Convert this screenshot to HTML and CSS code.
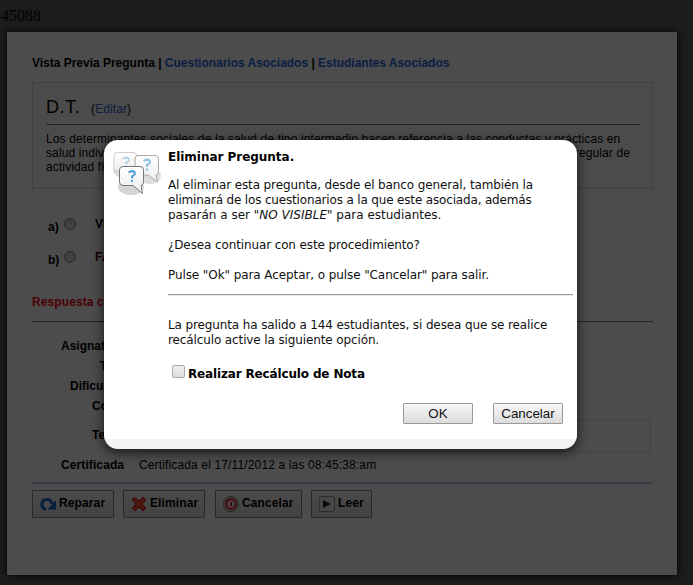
FILE: index.html
```html
<!DOCTYPE html>
<html lang="es">
<head>
<meta charset="utf-8">
<title>Vista Previa Pregunta</title>
<link rel="stylesheet" href="styles.css">
</head>
<body>
<div class="counter">45088</div>
<main class="page">
  <nav class="tabs">Vista Previa Pregunta | <a>Cuestionarios Asociados</a> | <a>Estudiantes Asociados</a></nav>
  <section class="question">
    <h1>D.T. <span class="edit">(<a>Editar</a>)</span></h1>
    <p><span>Los determinantes sociales de la salud de tipo intermedio hacen referencia a las conductas y prácticas en</span><br>
    <span class="q2"><span>salud individuales</span><span>regular de</span></span>
    actividad física.</p>
  </section>
  <div class="option"><b>a)</b><i class="radio"></i><span>VERDADERO</span></div>
  <div class="option"><b>b)</b><i class="radio"></i><span class="false">FALSO</span></div>
  <div class="answer">Respuesta correcta</div>
  <div class="rule"></div>
  <div class="details">
    <span class="l1">Asignatura</span><span class="l2">Tipo</span><span class="l3">Dificultad</span><span class="l4">Corte</span>
    <div class="topic"><span>Tema</span><div class="field"></div></div>
    <div class="cert"><b>Certificada</b><span>Certificada el 17/11/2012 a las 08:45:38:am</span></div>
  </div>
  <div class="blue-rule"></div>
  <div class="actions">
    <button class="w1"><svg width="18" height="18" viewBox="0 0 18 18"><path d="M7 14.500C1.500 12.500 1.500 5 7.500 4.500C11 4.300 12.500 6.500 13 9" fill="none" stroke="#1f68d0" stroke-width="3.200"/><path d="M17 5V14.500H8.500Z" fill="#1f68d0"/></svg><span>Reparar</span></button>
    <button class="w2"><svg width="18" height="18" viewBox="0 0 18 18"><path d="M4.500 2.500L9 6L13 2L16 5L12 9L16 13L13 16L9 12L5 16L2 13L6 9L2 5Z" fill="#ff4a30" stroke="#d01a12" stroke-linejoin="round"/></svg><span>Eliminar</span></button>
    <button class="w3"><svg width="18" height="18" viewBox="0 0 18 18"><circle cx="9" cy="9" r="7.500" fill="#ddd" stroke="#777"/><circle cx="9" cy="9" r="4.800" fill="#f4e8e8" stroke="#e3222d" stroke-width="2.200"/><path d="M9 7.200V10.800" stroke="#d61d28" stroke-width="2"/></svg><span>Cancelar</span></button>
    <button class="w4"><svg width="18" height="18" viewBox="0 0 18 18"><rect x="1.500" y="1.500" width="15" height="15" rx="1" fill="#efefef" stroke="#999"/><path d="M5 5L13 9L5 13Z" fill="#222"/></svg><span>Leer</span></button>
  </div>
</main>
<div class="overlay"></div>
<div class="dialog" role="dialog">
  <svg class="bubbles" width="50" height="50" viewBox="0 0 50 50">
    <defs><linearGradient id="bg" x2="0" y2="1"><stop stop-color="#fff"/><stop offset="1" stop-color="#eee"/></linearGradient></defs>
    <g fill="#ddd"><ellipse cx="11" cy="19" rx="11" ry="8"/><ellipse cx="37" cy="25" rx="11" ry="8"/></g>
    <path d="M4.500 1.500H20Q24 1.500 24 5V17Q24 20 21 20H4Q1 20 1 17V4.500Q1 1.500 4.500 1.500Z" fill="url(#bg)" stroke="#ccc"/>
    <path d="M9.500 8Q13 5.500 15.500 7.500Q17 10 13 12V13M13 14.500V16" class="mark faint"/>
    <path d="M25 4.500H42Q45.500 4.500 45.500 8V20Q45.500 23.500 43 24L44.500 31L35 24H25Q22 23 22 20V8Q22 4.500 25 4.500Z" fill="url(#bg)" stroke="#aaa"/>
    <path d="M30.500 10Q34 7.500 36.500 9.500Q38 12 34 14V16M34 17.500V19.500" class="mark mid"/>
    <ellipse cx="18" cy="36" rx="13" ry="8" fill="#d5d5d5"/>
    <path d="M10 15.500H27Q30.500 15.500 30.500 19V31Q30.500 34 28 34.500L29.500 42.500L20 34.500H10Q6.500 34 6.500 31V19Q6.500 15.500 10 15.500Z" fill="url(#bg)" stroke="#777"/>
    <path d="M15.500 21.500Q19 19 21.500 21Q23 23.500 19 25.500V27.500M19 29V31" class="mark"/>
  </svg>
  <div class="message">
    <b class="title">Eliminar Pregunta.</b>
    <p><span>Al eliminar esta pregunta, desde el banco general, también la</span><br><span class="m2">eliminará de los cuestionarios a la que este asociada, además</span><br><span class="m3">pasarán a ser <em>"NO VISIBLE"</em> para estudiantes.</span></p>
    <p>¿Desea continuar con este procedimiento?</p>
    <p class="m5">Pulse "Ok" para Aceptar, o pulse "Cancelar" para salir.</p>
    <div class="divider"></div>
    <p class="count"><span>La pregunta ha salido a 144 estudiantes, si desea que se realice</span><br><span class="m7">recálculo active la siguiente opción.</span></p>
    <label><i class="check"></i><b>Realizar Recálculo de Nota</b></label>
    <div class="buttons"><button>OK</button><button>Cancelar</button></div>
  </div>
</div>
</body>
</html>
```
FILE: styles.css
```css
* { box-sizing: border-box; }
body { margin: 0; height: 585px; overflow: hidden; background: #606060; font-family: "Liberation Sans", Arial, sans-serif; font-size: 12px; color: #000; }
a { color: #36d; }
.counter { height: 32px; padding: 7px 0 0 1px; font: 16px/18px "Liberation Serif", serif; }
.page { width: 670px; height: 543px; margin-left: 7px; padding: 24px 24px 0 25px; background: #fff; box-shadow: 0 0 7px #000; }
.tabs { height: 26px; font-weight: bold; line-height: 14px; white-space: nowrap; letter-spacing: -.015px; }
.tabs a { color: #2468e0; }
.question { height: 107px; border: 1px solid #d8d8d8; padding: 13px 12px 0 13px; background: #fafafa; line-height: 14px; white-space: nowrap; }
.question h1 { height: 29px; margin: 0; border-bottom: 1px solid #777; font-size: 18px; font-weight: normal; line-height: 22px; letter-spacing: .6px; }
.edit { margin-left: 5px; font-size: 12px; letter-spacing: .1px; }
.question p { margin: 7px 0 0; letter-spacing: .115px; }
.q2 { display: flex; justify-content: space-between; padding-right: 10px; }
.option { display: flex; height: 33px; padding-left: 16px; font-weight: bold; line-height: 14px; }
.question + .option { margin-top: 28px; }
.option b { width: 15px; padding-top: 3px; }
.option > span { margin-left: 18px; }
.false { color: #500; }
.radio { width: 12px; height: 12px; margin: 1px 1px 0; border: 1px solid #888; border-radius: 50%; background: linear-gradient(#ccc, #ddd); }
.answer { height: 38px; padding-top: 11px; color: #ff0010; font-weight: bold; line-height: 16px; letter-spacing: .1px; }
.rule { height: 2px; border-top: 1px solid #777; border-bottom: 1px solid #eee; }
.details { height: 159px; padding-top: 13px; font-weight: bold; line-height: 20px; }
.details > span { display: block; height: 20px; }
.l1 { padding-left: 29px; }
.l2 { padding-left: 68px; }
.l3 { padding-left: 38px; }
.l4 { padding-left: 60px; }
.topic { display: flex; height: 33px; margin-top: 3px; padding-right: 2px; line-height: 32px; }
.topic span { width: 107px; padding-left: 60px; }
.field { flex: 1; height: 33px; border: 1px solid #ddd; }
.cert { display: flex; padding: 3px 0 0 29px; }
.cert b { width: 78px; letter-spacing: .1px; }
.cert span { font-weight: normal; letter-spacing: .14px; }
.blue-rule { height: 2px; background: #b4d2f0; }
.actions { display: flex; margin-top: 6px; }
.actions button { display: flex; align-items: center; height: 28px; margin-right: 9px; padding: 0 0 0 6px; border: 1px solid #888; border-radius: 1px; background: linear-gradient(#fafafa, #ddd); font: bold 12px "Liberation Sans", sans-serif; letter-spacing: .12px; color: #000; white-space: nowrap; }
.actions span { padding-bottom: 2px; }
.actions svg { margin-right: 2px; }
.actions .w1 { width: 82px; }
.actions .w2 { width: 82px; margin-right: 10px; }
.actions .w3 { width: 87px; }
.actions .w4 { width: 61px; }
.overlay { position: absolute; inset: 0; background: rgba(0, 0, 0, .7); }
.dialog { position: absolute; left: 104px; top: 140px; display: flex; width: 473px; height: 309px; padding: 10px 4px 0 9px; border-radius: 14px; background: linear-gradient(#fff 299px, #f4f3f4 299px); box-shadow: 0 3px 12px rgba(0, 0, 0, .75); font: 12px/15px "DejaVu Sans", Verdana, sans-serif; letter-spacing: -.12px; color: #111; white-space: nowrap; }
.bubbles { margin-top: 1px; }
.mark { fill: none; stroke: #4b9dd9; stroke-width: 2; }
.faint { opacity: .4; }
.mid { opacity: .65; }
.m2 { letter-spacing: -.165px; }
.m3 { letter-spacing: 0; }
.message .m5 { letter-spacing: -.09px; }
.m7 { letter-spacing: -.12px; }
.message { flex: 1; padding-left: 5px; }
.title { display: block; height: 28px; color: #000; letter-spacing: -.03px; }
.message p { margin: 0 0 15px; }
.divider { height: 2px; margin-top: -4px; border-top: 1px solid #999; border-bottom: 1px solid #eee; }
.message .count { margin: 22px 0 16px; }
label { display: flex; height: 39px; color: #000; }
.check { width: 13px; height: 13px; margin: 1px 3px 0 4px; border: 1px solid #aaa; border-radius: 2px; background: linear-gradient(#eee, #ddd); }
label b { padding-top: 3px; letter-spacing: -.15px; }
.buttons { display: flex; justify-content: flex-end; gap: 20px; padding-right: 10px; }
.buttons button { width: 70px; height: 21px; padding: 0; border: 1px solid #999; border-radius: 1px; background: linear-gradient(#f6f6f6, #ddd); font: 13.333px "Liberation Sans", sans-serif; color: #111; }
```
